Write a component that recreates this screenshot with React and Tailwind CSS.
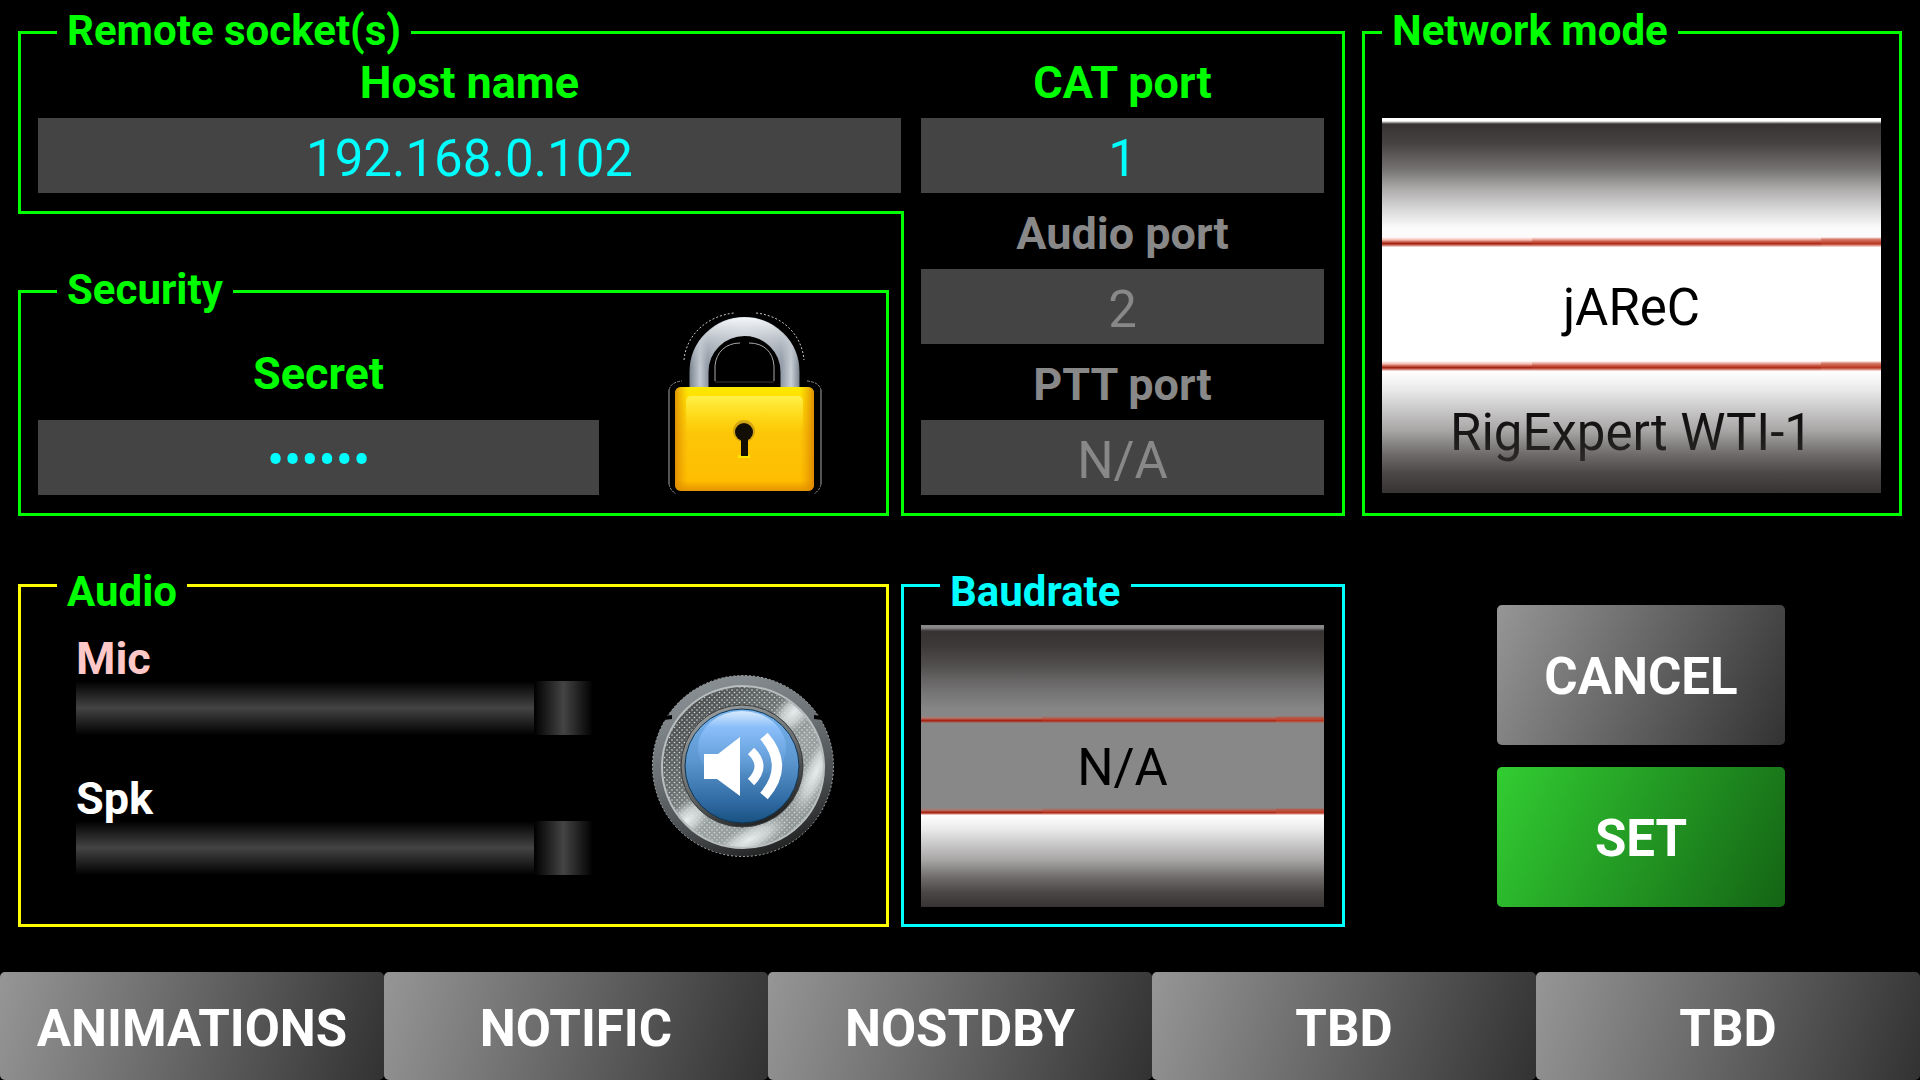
import React, { useState } from "react";

const labelBase = "text-center text-[45px] leading-11 font-bold";
const inputBase = "block h-[75px] w-full min-w-0 bg-[#444444] pt-1.5 text-center text-[51px] leading-[69px] outline-none";
const actionBase = "h-[140px] w-[288px] rounded-[5px] pt-1 text-[51px] font-bold text-white";

const Field = ({ id, label, disabled, ...props }) => (
    <div>
        <label htmlFor={id} className={`block h-[58px] pt-px ${labelBase} ${disabled ? "text-[#888888]" : "text-[#00ff00]"}`}>
            {label}
        </label>
        <input id={id} disabled={disabled} className={`${inputBase} ${disabled ? "text-[#888888]" : "text-[#00ffff]"}`} {...props} />
    </div>
);

const RedLine = ({ height }) => (
    <span className={`flex w-full ${height}`}>
        <span className="w-[30%] bg-[linear-gradient(to_bottom,#e8604800_0%,#e8604870_30%,#b83420d0_50%,#a01c0c_68%,#b83420a0_84%,#e8604820_100%)]" />
        <span className="w-[58%] bg-[linear-gradient(to_bottom,#d04c3400_0%,#d04c3480_25%,#c44430e0_45%,#ac2814_68%,#b83420a0_84%,#e8604820_100%)]" />
        <span className="flex-1 bg-[linear-gradient(to_bottom,#c4442c00_0%,#c4442cb0_22%,#c44830e8_45%,#b83420_68%,#c44830a0_84%,#e8604820_100%)]" />
    </span>
);

// Wheel picker: three visible rows, the middle one is selected
const Wheel = ({ label, rows, rowClass, lineClass, muted }) => (
    <div className={`relative overflow-hidden ${muted ? "bg-[#888888]" : "bg-white"}`}>
        <ul role="listbox" aria-label={label}>
            {rows.map((row, i) => (
                <li
                    key={i}
                    role="option"
                    aria-selected={i === 1}
                    className={`flex items-center justify-center pt-1 text-[51px] leading-[60px] text-black ${rowClass} ${row ? "" : i === 2 ? "bg-white" : ""}`}
                >
                    {row}
                </li>
            ))}
        </ul>
        <div className="pointer-events-none absolute inset-0 flex flex-col">
            <div className="h-[3px]" />
            <div className="h-[3px] bg-[linear-gradient(to_bottom,#37333200,#373332)]" />
            <div className="flex-113 bg-[linear-gradient(to_bottom,#373332_0%,#373332ed_17%,#373332b0_40%,#3733326b_57%,#37333238_73%,#37333205_92%)]" />
            <RedLine height={lineClass} />
            <div className="flex-114" />
            <RedLine height={lineClass} />
            <div className="flex-122 bg-[linear-gradient(to_bottom,#37333200_0%,#3733321c_16%,#37333240_30%,#37333270_49%,#373332b8_68%,#373332e6_84%,#373332_100%)]" />
        </div>
    </div>
);

const Slider = ({ id, label, labelClass }) => {
    const [value, setValue] = useState(100);
    return (
        <div>
            <label htmlFor={id} className={`block text-[45px] leading-11 font-bold ${labelClass}`}>{label}</label>
            <input
                id={id}
                type="range"
                value={value}
                onChange={e => setValue(e.target.value)}
                className="block h-[54px] w-full appearance-none bg-[linear-gradient(to_bottom,#000000,#444444,#000000)] [&::-webkit-slider-thumb]:h-[54px] [&::-webkit-slider-thumb]:w-[59px] [&::-webkit-slider-thumb]:appearance-none [&::-webkit-slider-thumb]:bg-[linear-gradient(to_right,#000000,#444444,#000000)]"
            />
        </div>
    );
};

const LockIcon = () => (
    <svg width="154" height="184" viewBox="0 0 154 184" fill="none">
        <defs>
            <linearGradient id="shackle" x1="21" x2="132" y1="0" y2="0" gradientUnits="userSpaceOnUse">
                <stop offset="0" stopColor="#77808b" />
                <stop offset="0.1" stopColor="#c3cad2" />
                <stop offset="0.17" stopColor="#8f98a4" />
                <stop offset="0.5" stopColor="#d3d8dd" />
                <stop offset="0.83" stopColor="#8f98a4" />
                <stop offset="0.92" stopColor="#c9d0d7" />
                <stop offset="1" stopColor="#77808b" />
            </linearGradient>
            <linearGradient id="shackleTop" x1="0" x2="0" y1="6" y2="56" gradientUnits="userSpaceOnUse">
                <stop offset="0" stopColor="#f4f6f8" />
                <stop offset="0.4" stopColor="#c6ccd2" stopOpacity="0.85" />
                <stop offset="1" stopColor="#aab2bb" stopOpacity="0" />
            </linearGradient>
            <linearGradient id="lockBody" x1="0" x2="0" y1="75" y2="179" gradientUnits="userSpaceOnUse">
                <stop offset="0" stopColor="#ffe800" />
                <stop offset="0.45" stopColor="#fdc608" />
                <stop offset="0.9" stopColor="#ffbd00" />
                <stop offset="1" stopColor="#e39300" />
            </linearGradient>
            <linearGradient id="lockSide" x1="6" x2="146" y1="0" y2="0" gradientUnits="userSpaceOnUse">
                <stop offset="0" stopColor="#d98200" stopOpacity="0.9" />
                <stop offset="0.1" stopColor="#e89a00" stopOpacity="0" />
                <stop offset="0.9" stopColor="#e89a00" stopOpacity="0" />
                <stop offset="1" stopColor="#d98200" stopOpacity="0.9" />
            </linearGradient>
            <linearGradient id="lockShine" x1="0" x2="0" y1="84" y2="122" gradientUnits="userSpaceOnUse">
                <stop offset="0" stopColor="#fff04a" />
                <stop offset="1" stopColor="#ffd21a" stopOpacity="0" />
            </linearGradient>
        </defs>
        <path d="M16 48C18 24 38 4 66 1M88 1C116 4 134 24 136 48" stroke="#c8c8c8" strokeDasharray="2 2" />
        <path d="M47 69V54C48 40 58 31 72 31M81 31C96 31 105 40 106 54V69" stroke="#a8a8a8" />
        <path d="M47 70H106" stroke="#3a3a3a" />
        <path d="M1 78V172M153 78V172" stroke="#a8a8a8" />
        <path d="M1 78Q3 70 14 69M139 69Q151 70 153 78M1 172Q2 178 8 182M153 172Q152 178 146 182" stroke="#8a8a8a" strokeDasharray="3 1" />
        <path d="M31 76V60A45.5 45.5 0 0 1 122 60V76" stroke="url(#shackle)" strokeWidth="19" />
        <path d="M31 76V60A45.5 45.5 0 0 1 122 60V76" stroke="url(#shackleTop)" strokeWidth="18" />
        <rect x="7" y="75" width="139" height="104" rx="6" fill="url(#lockBody)" />
        <rect x="7" y="75" width="139" height="104" rx="6" fill="url(#lockSide)" />
        <rect x="18" y="84" width="117" height="44" rx="5" fill="url(#lockShine)" />
        <circle cx="76" cy="119" r="11" fill="#b88a10" opacity="0.6" />
        <path d="M70 143V146H82V143Z" fill="#ffe600" />
        <circle cx="76" cy="120" r="9" fill="#120e04" />
        <path d="M73 124H80V144H73Z" fill="#120e04" />
    </svg>
);

const SpeakerIcon = () => (
    <svg width="184" height="184" viewBox="0 0 184 184" fill="none">
        <defs>
            <linearGradient id="rim" x1="60" x2="130" y1="0" y2="184" gradientUnits="userSpaceOnUse">
                <stop offset="0" stopColor="#8b9296" />
                <stop offset="0.4" stopColor="#6a7073" />
                <stop offset="0.7" stopColor="#4b4e50" />
                <stop offset="1" stopColor="#1c1c1c" />
            </linearGradient>
            <pattern id="knurl" width="5" height="5" patternUnits="userSpaceOnUse">
                <circle cx="1" cy="1" r="0.8" fill="#d4d9d9" />
                <circle cx="3.5" cy="3.5" r="0.8" fill="#d4d9d9" />
            </pattern>
            <linearGradient id="ringShade" x1="30" x2="160" y1="20" y2="160" gradientUnits="userSpaceOnUse">
                <stop offset="0" stopColor="#464747" />
                <stop offset="0.35" stopColor="#6a7070" />
                <stop offset="0.6" stopColor="#9aa1a1" />
                <stop offset="1" stopColor="#8d9494" />
            </linearGradient>
            <radialGradient id="glint">
                <stop offset="0" stopColor="#e8ecec" />
                <stop offset="0.5" stopColor="#d2d7d7" stopOpacity="0.8" />
                <stop offset="1" stopColor="#b6bcbc" stopOpacity="0" />
            </radialGradient>
            <linearGradient id="innerRim" x1="60" x2="120" y1="30" y2="155" gradientUnits="userSpaceOnUse">
                <stop offset="0" stopColor="#9a9fa0" />
                <stop offset="0.5" stopColor="#6a6c6d" />
                <stop offset="1" stopColor="#181818" />
            </linearGradient>
            <linearGradient id="blueFace" x1="0" x2="0" y1="36" y2="150" gradientUnits="userSpaceOnUse">
                <stop offset="0" stopColor="#78b4ee" />
                <stop offset="0.45" stopColor="#5c96cf" />
                <stop offset="0.8" stopColor="#316ba4" />
                <stop offset="1" stopColor="#17507f" />
            </linearGradient>
            <linearGradient id="blueShine" x1="0" x2="0" y1="37" y2="102" gradientUnits="userSpaceOnUse">
                <stop offset="0" stopColor="#d8eafc" />
                <stop offset="0.25" stopColor="#8abefa" />
                <stop offset="1" stopColor="#6aa5de" stopOpacity="0" />
            </linearGradient>
            <clipPath id="ringClip">
                <circle cx="92" cy="93" r="80" />
            </clipPath>
        </defs>
        <circle cx="92" cy="92" r="90.5" fill="url(#rim)" />
        <circle cx="92" cy="92" r="90.5" stroke="#a5a9aa" strokeDasharray="2 2" />
        <circle cx="92" cy="93" r="81" fill="url(#ringShade)" stroke="#b9bebf" strokeWidth="2" />
        <g clipPath="url(#ringClip)">
            <circle cx="92" cy="93" r="80" fill="url(#knurl)" />
            <ellipse cx="143" cy="38" rx="34" ry="17" fill="url(#glint)" transform="rotate(-45 143 38)" />
            <ellipse cx="165" cy="98" rx="14" ry="50" fill="url(#glint)" transform="rotate(25 165 98)" />
            <ellipse cx="98" cy="166" rx="46" ry="15" fill="url(#glint)" transform="rotate(-28 98 166)" />
            <ellipse cx="36" cy="146" rx="34" ry="17" fill="url(#glint)" transform="rotate(-40 36 146)" />
        </g>
        <circle cx="91" cy="92" r="61" fill="url(#innerRim)" stroke="#3c3d3e" />
        <circle cx="91" cy="92" r="57" fill="url(#blueFace)" stroke="#0e3553" />
        <ellipse cx="91" cy="74" rx="44" ry="37" fill="url(#blueShine)" />
        <path d="M53 80H67L89 63V122L66 105H53Z" fill="#ffffff" />
        <path d="M100 77Q116 92 100 108" stroke="#ffffff" strokeWidth="9" />
        <path d="M113 62Q139 92 113 122" stroke="#ffffff" strokeWidth="10" />
        <path d="M13 42L21 41V45L13 46ZM163 41L171 42V46L163 45Z" fill="#000000" />
    </svg>
);

const footerButtons = ["ANIMATIONS", "NOTIFIC", "NOSTDBY", "TBD", "TBD"];

const App = () => {
    const [host, setHost] = useState("192.168.0.102");
    const [catPort, setCatPort] = useState("1");
    const [secret, setSecret] = useState("secret");

    return (
        <div className="flex min-h-screen flex-col bg-black font-[Roboto,sans-serif]">
            <main className="grid grid-cols-[871fr_12px_444fr_17px_540fr] px-[18px] pt-2 pb-11">
                {/* Host part of the remote socket frame */}
                <fieldset className="col-span-2 min-w-0 border-3 border-r-0 border-[#00ff00] pt-[3px] pb-[18px] pl-[17px]">
                    <legend className="ml-[19px] px-[10px] pb-1 text-[42px] leading-[45px] font-bold text-[#00ff00]">Remote socket(s)</legend>
                    <Field id="host" label="Host name" value={host} onChange={e => setHost(e.target.value)} />
                </fieldset>

                {/* Ports part, joins the host frame on its left */}
                <div className="row-span-2 mt-[23px] flex flex-col">
                    <div className="border-t-3 border-r-3 border-[#00ff00] pt-[26px] pr-[18px] pb-[18px] pl-5">
                        <Field id="cat" label="CAT port" value={catPort} onChange={e => setCatPort(e.target.value)} />
                    </div>
                    <div className="flex flex-1 flex-col gap-[18px] border-3 border-t-0 border-[#00ff00] pr-[18px] pb-[17px] pl-[17px]">
                        <Field id="audioPort" label="Audio port" value="2" disabled readOnly />
                        <Field id="pttPort" label="PTT port" value="N/A" disabled readOnly />
                    </div>
                </div>

                <fieldset className="col-start-5 row-span-2 row-start-1 min-w-0 border-3 border-[#00ff00] pt-[61px] pr-[18px] pb-[19px] pl-[17px]">
                    <legend className="px-[10px] pb-1 text-[42px] leading-[45px] font-bold text-[#00ff00]">Network mode</legend>
                    <Wheel label="Network mode" rows={["", "jAReC", "RigExpert WTI-1"]} rowClass="h-[125px]" lineClass="h-[10px]" />
                </fieldset>

                <fieldset className="col-start-1 mt-[53px] min-w-0 border-3 border-[#00ff00] pb-[17px]">
                    <legend className="ml-9 px-[10px] pb-1 text-[42px] leading-[45px] font-bold text-[#00ff00]">Security</legend>
                    <div className="grid grid-cols-[578fr_287fr]">
                        <div className="pt-9 pl-[17px]">
                            <label htmlFor="secret" className={`mb-6 block ${labelBase} text-[#00ff00]`}>Secret</label>
                            <input
                                id="secret"
                                type="password"
                                value={secret}
                                onChange={e => setSecret(e.target.value)}
                                className={`${inputBase} text-[#00ffff]`}
                            />
                        </div>
                        <button type="button" aria-label="Lock" className="-mt-1 ml-1 self-start justify-self-center">
                            <LockIcon />
                        </button>
                    </div>
                </fieldset>

                <fieldset className="col-start-1 mt-[45px] min-w-0 border-3 border-[#ffff00]">
                    <legend className="ml-9 px-[10px] pt-3 text-[42px] leading-[37px] font-bold text-[#00ff00]">Audio</legend>
                    <div className="grid grid-cols-[578fr_287fr]">
                        <div className="flex flex-col gap-[42px] pt-[27px] pr-[6px] pb-[49px] pl-[55px]">
                            <Slider id="mic" label="Mic" labelClass="text-[#ffc8c8]" />
                            <Slider id="spk" label="Spk" labelClass="text-white" />
                        </div>
                        <button type="button" aria-label="Sound" className="mt-16 self-start justify-self-center">
                            <SpeakerIcon />
                        </button>
                    </div>
                </fieldset>

                <fieldset className="col-start-3 mt-[45px] min-w-0 border-3 border-[#00ffff] pt-[15px] pr-[18px] pb-[17px] pl-[17px]">
                    <legend className="ml-[19px] px-[10px] pt-3 text-[42px] leading-[37px] font-bold text-[#00ffff]">Baudrate</legend>
                    <Wheel label="Baudrate" rows={["", "N/A", ""]} rowClass="h-[94px]" lineClass="h-[7px]" muted />
                </fieldset>

                <div className="col-start-5 mt-[45px] flex flex-col items-center gap-[22px] pt-11 pl-[18px]">
                    <button type="button" className={`${actionBase} bg-[linear-gradient(116deg,#969696,#323232)]`}>CANCEL</button>
                    <button type="button" className={`${actionBase} bg-[linear-gradient(116deg,#32cd32,#146414)]`}>SET</button>
                </div>
            </main>

            <nav className="mt-auto grid grid-cols-5">
                {footerButtons.map((name, i) => (
                    <button key={i} type="button" className="h-[108px] rounded-[5px] bg-[linear-gradient(106deg,#969696,#323232)] pt-1.5 text-[51px] font-bold text-white">
                        {name}
                    </button>
                ))}
            </nav>
        </div>
    );
};

export default App;
